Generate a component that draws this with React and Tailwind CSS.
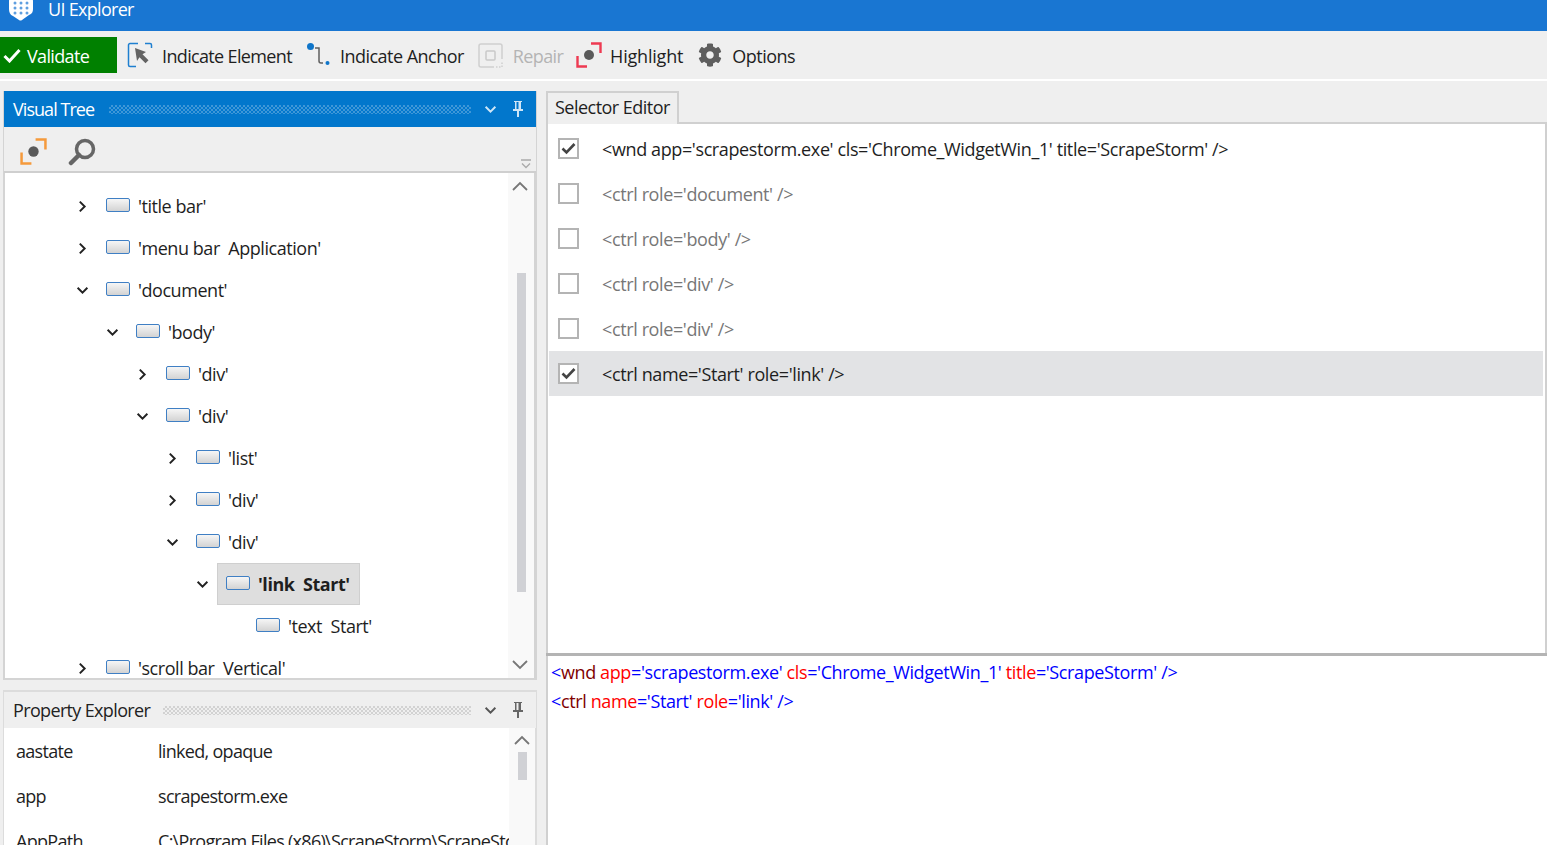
import { FaCog } from 'react-icons/fa';

const treeRows = [
  { level: 0, open: false, label: "'title bar'" },
  { level: 0, open: false, label: "'menu bar  Application'" },
  { level: 0, open: true, label: "'document'" },
  { level: 1, open: true, label: "'body'" },
  { level: 2, open: false, label: "'div'" },
  { level: 2, open: true, label: "'div'" },
  { level: 3, open: false, label: "'list'" },
  { level: 3, open: false, label: "'div'" },
  { level: 3, open: true, label: "'div'" },
  { level: 4, open: true, label: "'link  Start'", selected: true },
  { level: 5, leaf: true, label: "'text  Start'" },
  { level: 0, open: false, label: "'scroll bar  Vertical'" },
];

const selectorRows = [
  { checked: true, text: "<wnd app='scrapestorm.exe' cls='Chrome_WidgetWin_1' title='ScrapeStorm' />" },
  { text: "<ctrl role='document' />" },
  { text: "<ctrl role='body' />" },
  { text: "<ctrl role='div' />" },
  { text: "<ctrl role='div' />" },
  { checked: true, selected: true, text: "<ctrl name='Start' role='link' />" },
];

const properties = [
  ['aastate', 'linked, opaque'],
  ['app', 'scrapestorm.exe'],
  ['AppPath', 'C:\\Program Files (x86)\\ScrapeStorm\\ScrapeStorm.exe'],
];

const Logo = () => (
  <svg width="26" height="21" viewBox="0 0 26 21">
    <path d="M4 -2h18c2 0 3 1 3 3v8c0 3-1 5-4 6l-7 5c-1 .7-2 .7-3 0l-6-4c-3-1-4-4-4-7V1c0-2 1-3 3-3z" fill="#fff" />
    {[3, 8, 13].map((y) =>
      [7, 13, 19].map((x) => <circle key={`${x}-${y}`} cx={x} cy={y} r="1.500" fill="#5f9fe0" />)
    )}
  </svg>
);

const IndicateIcon = () => (
  <svg width="26" height="26" viewBox="0 0 26 26" fill="none">
    <path d="M11 1.500H3A1.500 1.500 0 0 0 1.500 3v20A1.500 1.500 0 0 0 3 24.500h6M18 1.500h5A1.500 1.500 0 0 1 24.500 3v3" stroke="#1f7fd0" strokeWidth="1.500" />
    <path d="M8 6l11 4-3.500 2.200 6 6-3 3-6-6L10 19z" fill="#636363" />
  </svg>
);

const AnchorIcon = () => (
  <svg width="26" height="26" viewBox="0 0 26 26" fill="none">
    <circle cx="4.500" cy="4.500" r="3.500" fill="#0f75c9" />
    <path d="M9 6h4v13c0 1.500 1 2 2 2h2" stroke="#5f5f5f" strokeWidth="1.500" />
    <circle cx="21.500" cy="21" r="2" fill="#0f75c9" />
  </svg>
);

const RepairIcon = () => (
  <svg width="25" height="25" viewBox="0 0 25 25" fill="none">
    <path d="M24 16V3a2 2 0 0 0-2-2H3a2 2 0 0 0-2 2v19a2 2 0 0 0 2 2h13" stroke="#cfcfcf" strokeWidth="1.500" />
    <path d="M18 24h6v-6" stroke="#cfcfcf" strokeWidth="1.500" strokeDasharray="1.500 1.500" />
    <rect x="8" y="8" width="9" height="9" rx="1" stroke="#c9c9c9" strokeWidth="1.500" />
  </svg>
);

const TargetIcon = ({ color, size = 26 }) => (
  <svg width={size} height={size} viewBox="0 0 26 26" fill="none">
    <path d="M1.500 14v10.500H11M15 1.500h9.500V11" stroke={color} strokeWidth="2.400" />
    <circle cx="13" cy="13" r="5" fill="#5a5a5a" />
  </svg>
);

const SearchIcon = () => (
  <svg width="28" height="28" viewBox="0 0 28 28" fill="none">
    <circle cx="17" cy="11" r="8.500" stroke="#666" strokeWidth="3.500" />
    <path d="M11 17L3 25" stroke="#666" strokeWidth="4.500" strokeLinecap="round" />
  </svg>
);

const Chevron = ({ open, className = 'text-[#222]', size = 13 }) => (
  <svg width={size} height={size} viewBox="0 0 12 12" fill="none" className={className}>
    {open ? (
      <path d="M1.500 3.500L6 8l4.500-4.500" stroke="currentColor" strokeWidth="1.800" />
    ) : (
      <path d="M3.500 1.500L8 6l-4.500 4.500" stroke="currentColor" strokeWidth="1.800" />
    )}
  </svg>
);

const ScrollArrow = ({ up }) => (
  <svg width="16" height="10" viewBox="0 0 16 10" fill="none">
    <path d={up ? 'M1 9l7-7 7 7' : 'M1 1l7 7 7-7'} stroke="#777" strokeWidth="1.800" />
  </svg>
);

const Pin = ({ color }) => (
  <svg width="12" height="16" viewBox="0 0 12 16" className="shrink-0">
    <path d="M2 0h8v1H9v7h2v2H1V8h2V1H2zM4.500 1v7h2V1zM5 10h2v6H5z" fill={color} fillRule="evenodd" />
  </svg>
);

const NodeIcon = () => (
  <span className="-mt-[2px] block h-[14px] w-[24px] shrink-0 rounded-[2px] border border-[#3f7fc4] bg-gradient-to-b from-[#f6f6f6] to-[#d3d3d3]" />
);

const ToolButton = ({ icon, label, disabled, className, gap }) => (
  <div className={`flex items-center ${className}`}>
    {icon}
    <span className={`mt-[2px] ${gap} ${disabled ? 'text-[#b4b4b4]' : 'text-[#1e1e1e]'}`}>{label}</span>
  </div>
);

const PanelHeader = ({ title, active }) => (
  <div className={`flex h-[36px] items-center pl-[9px] text-[18px] ${active ? 'bg-[#0277cc] text-white' : 'bg-[#efefef] text-[#222]'}`}>
    <span className={active ? 'tracking-[-0.95px]' : 'tracking-[-0.65px]'}>{title}</span>
    <div
      className={`mr-[13px] h-[9px] flex-1 bg-[length:4px_4px] ${
        active
          ? 'ml-[15px] bg-[repeating-conic-gradient(#3f97d8_0_25%,transparent_0_50%)]'
          : 'ml-[13px] bg-[repeating-conic-gradient(#d2d2d2_0_25%,transparent_0_50%)]'
      }`}
    />
    <Chevron open className={active ? 'text-[#cfe6f7]' : 'text-[#555]'} />
    <div className="ml-[15px] mr-[12px]">
      <Pin color={active ? '#cfe6f7' : '#666'} />
    </div>
  </div>
);

const TreeRow = ({ row }) => (
  <div className="flex h-[42px] items-center" style={{ paddingLeft: 71 + row.level * 30 }}>
    <div className="flex w-[13px] shrink-0 justify-center">{!row.leaf && <Chevron open={row.open} />}</div>
    {row.selected ? (
      <div className="ml-[8px] flex h-[42px] items-center border border-[#cfcfcf] bg-[#dedede] pl-[8px] pr-[9px]">
        <NodeIcon />
        <span className="ml-[8px] whitespace-pre font-bold tracking-[-0.45px]">{row.label}</span>
      </div>
    ) : (
      <div className="ml-[17px] flex items-center">
        <NodeIcon />
        <span className="ml-[8px] whitespace-pre tracking-[-0.45px]">{row.label}</span>
      </div>
    )}
  </div>
);

const SelectorRow = ({ row }) => (
  <div className={`flex h-[45px] items-center ${row.selected ? 'bg-[#e2e3e5]' : ''}`}>
    <div className="ml-[9px] flex h-[21px] w-[21px] items-center justify-center border-2 border-[#b4b4b4] bg-white">
      {row.checked && (
        <svg width="15" height="13" viewBox="0 0 15 13" fill="none">
          <path d="M1.500 6.500L5.500 10.500L13.500 2" stroke="#444" strokeWidth="2.600" />
        </svg>
      )}
    </div>
    <span className={`ml-[23px] mt-[2px] tracking-[-0.38px] ${row.checked ? 'text-[#1e1e1e]' : 'text-[#777]'}`}>{row.text}</span>
  </div>
);

const Attr = ({ name, value }) => (
  <>
    {' '}
    <span className="text-[#ff0000]">{name}</span>
    <span className="text-[#0000ff]">='{value}'</span>
  </>
);

const Tag = ({ name, children }) => (
  <div className="flex h-[29px] items-center whitespace-pre text-[#0000ff]">
    <span>
      &lt;<span className="text-[#800000]">{name}</span>
      {children} /&gt;
    </span>
  </div>
);

export default function App() {
  return (
    <div className="flex h-[845px] w-[1547px] flex-col overflow-hidden bg-[#efefef] font-['Open_Sans','Noto_Sans',sans-serif] text-[18px] text-[#1e1e1e]">
      <div className="flex h-[31px] shrink-0 items-start overflow-hidden bg-[#1976d2] text-white">
        <div className="ml-[8px]"><Logo /></div>
        <span className="ml-[14px] -mt-[4px] tracking-[-0.7px]">UI Explorer</span>
      </div>

      <div className="flex h-[48px] shrink-0 items-center tracking-[-0.65px]">
        <div className="flex h-[36px] w-[117px] items-center bg-[#008000] pl-[3px] text-white">
          <svg width="18" height="15" viewBox="0 0 18 15" fill="none">
            <path d="M1.500 8L6.500 13L16.500 2" stroke="#fff" strokeWidth="3" />
          </svg>
          <span className="ml-[6px] mt-[2px]">Validate</span>
        </div>
        <ToolButton className="ml-[10px]" gap="ml-[9px]" icon={<IndicateIcon />} label="Indicate Element" />
        <ToolButton className="ml-[14px]" gap="ml-[8px] tracking-[-0.52px]" icon={<AnchorIcon />} label="Indicate Anchor" />
        <ToolButton className="ml-[14px]" gap="ml-[10px]" icon={<RepairIcon />} label="Repair" disabled />
        <ToolButton className="ml-[13px]" gap="ml-[8px] tracking-[-0.2px]" icon={<TargetIcon color="#ee3a52" />} label="Highlight" />
        <ToolButton className="ml-[15px]" gap="ml-[10px] tracking-[-0.5px]" icon={<FaCog size={24} color="#5e5e5e" />} label="Options" />
      </div>

      <div className="h-[2px] shrink-0 bg-white" />

      <div className="flex min-h-0 flex-1 pt-[10px]">
        <div className="ml-[3px] flex w-[534px] shrink-0 flex-col">
          <div className="flex h-[589px] shrink-0 flex-col border-x border-b-2 border-[#d4d4d4]">
            <PanelHeader title="Visual Tree" active />
            <div className="relative flex h-[46px] shrink-0 items-center gap-[21px] border-b-2 border-[#cfcfcf] pl-[16px] pt-[5px]">
              <TargetIcon color="#f59a3c" size={27} />
              <SearchIcon />
              <svg width="10" height="10" viewBox="0 0 10 10" fill="none" className="absolute bottom-[2px] right-[5px]">
                <path d="M0 1h10M1 4.500l4 4 4-4" stroke="#aaa" strokeWidth="1.300" />
              </svg>
            </div>
            <div className="flex min-h-0 flex-1 border-x border-r-2 border-[#d4d4d4] bg-white">
              <div className="min-w-0 flex-1 overflow-hidden pt-[12px]">
                {treeRows.map((row, i) => <TreeRow key={i} row={row} />)}
              </div>
              <div className="flex w-[26px] shrink-0 flex-col items-start bg-[#f9f9f9] pl-[4px] pt-[8px]">
                <ScrollArrow up />
                <div className="ml-[5px] mt-[82px] h-[319px] w-[9px] bg-[#d0d1d5]" />
                <div className="mt-[68px]"><ScrollArrow /></div>
              </div>
            </div>
          </div>

          <div className="mt-[10px] flex min-h-0 flex-1 flex-col border-x border-t-2 border-[#dcdcdc]">
            <PanelHeader title="Property Explorer" />
            <div className="flex min-h-0 flex-1 border-r-[1px] border-[#dcdcdc] bg-white">
              <div className="min-w-0 flex-1 overflow-hidden pt-[1px]">
                {properties.map(([name, value]) => (
                  <div key={name} className="flex h-[45px] items-center whitespace-nowrap tracking-[-0.7px]">
                    <span className="ml-[12px] w-[142px] shrink-0">{name}</span>
                    <span>{value}</span>
                  </div>
                ))}
              </div>
              <div className="flex w-[26px] shrink-0 flex-col items-start bg-[#f9f9f9] pl-[5px] pt-[7px]">
                <ScrollArrow up />
                <div className="ml-[4px] mt-[7px] h-[28px] w-[9px] bg-[#d0d1d5]" />
              </div>
            </div>
          </div>
        </div>

        <div className="ml-[9px] flex min-w-0 flex-1 flex-col">
          <div className="flex h-[33px] shrink-0">
            <div className="flex w-[133px] items-center border-x-2 border-t-2 border-[#d0d0d0] pb-[2px] pl-[7px] tracking-[-0.52px]">
              Selector Editor
            </div>
            <div className="flex-1 border-b-2 border-[#d0d0d0]" />
          </div>
          <div className="h-[529px] shrink-0 border-x-2 border-[#d0d0d0] bg-white pl-[1px] pr-[2px] pt-[2px]">
            {selectorRows.map((row, i) => <SelectorRow key={i} row={row} />)}
          </div>
          <div className="h-[3px] shrink-0 bg-[#b4b4b4]" />
          <div className="min-h-0 flex-1 border-l-2 border-[#d0d0d0] bg-white pl-[3px] pt-[2px] tracking-[-0.38px]">
            <Tag name="wnd">
              <Attr name="app" value="scrapestorm.exe" />
              <Attr name="cls" value="Chrome_WidgetWin_1" />
              <Attr name="title" value="ScrapeStorm" />
            </Tag>
            <Tag name="ctrl">
              <Attr name="name" value="Start" />
              <Attr name="role" value="link" />
            </Tag>
          </div>
        </div>
      </div>
    </div>
  );
}
